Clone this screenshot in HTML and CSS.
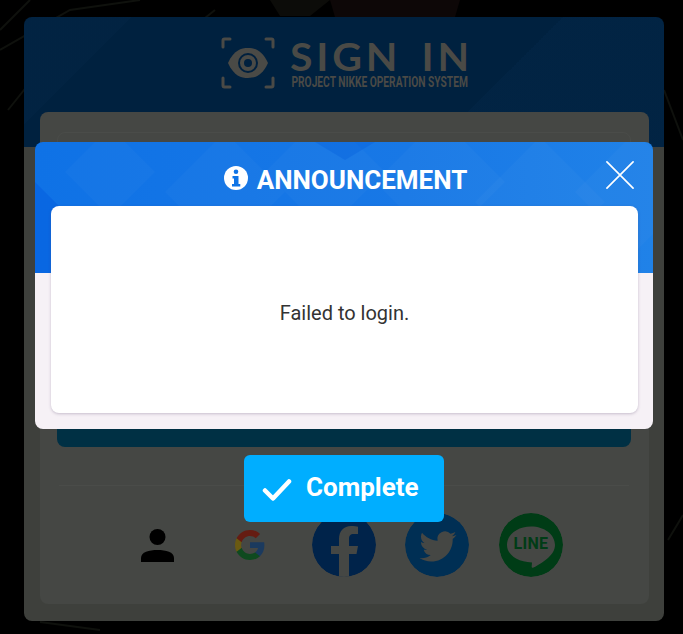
FILE: index.html
```html
<!DOCTYPE html>
<html lang="en">
<head>
<meta charset="utf-8">
<title>Sign in</title>
<link rel="stylesheet" href="styles.css">
</head>
<body>
<div class="stage">
  <svg class="bgart" viewBox="0 0 683 634" aria-hidden="true">
    <g fill="none" stroke="#0f110d" stroke-width="2">
      <path d="M0 50 70 10 140 0M8 110 40 70M0 30 30 0M215 10 165 50"/>
      <path d="M668 540 683 515M664 90 683 140M100 630 40 622"/>
    </g>
    <path d="M270 0h60l-20 16h-30z" fill="#0c0c09"/>
    <path d="M330 0h130l-5 17h-120z" fill="#0d0707"/>
  </svg>
  <main class="card">
    <header class="brand">
      <svg class="eye" viewBox="0 0 54 52" aria-hidden="true">
        <g fill="none" stroke="#4a4a46" stroke-width="3" stroke-linecap="round">
          <path d="M2 10V3.500Q2 2 3.500 2H9M45 2h5.500Q52 2 52 3.500V10M2 41v7.500Q2 50 3.500 50H9M45 50h5.500Q52 50 52 48.500V41"/>
        </g>
        <path d="M7 26C13 13 20 11 27 11s14 2 20 15c-6 13-13 15-20 15S13 39 7 26z" fill="#4a4a46"/>
        <circle cx="27" cy="26" r="9" fill="none" stroke="#00203e" stroke-width="2"/>
        <circle cx="27" cy="26" r="4" fill="#00203e"/>
      </svg>
      <div class="brand-text">
        <div class="brand-title">SIGN IN</div>
        <div class="brand-sub">PROJECT NIKKE OPERATION SYSTEM</div>
      </div>
    </header>
    <section class="panel">
      <div class="form-box"></div>
      <div class="teal-bar"></div>
      <hr class="divider">
      <div class="socials">
        <svg class="person" viewBox="0 0 33 33" aria-hidden="true">
          <circle cx="16.500" cy="8" r="8"/>
          <path d="M0 33v-4c0-6 8-8 16.500-8S33 23 33 29v4z"/>
        </svg>
        <svg class="google" viewBox="1 1 22 22" aria-hidden="true">
          <path fill="#1b3a5e" d="M22.560 12.250c0-.78-.07-1.530-.2-2.250H12v4.260h5.920c-.26 1.370-1.040 2.530-2.210 3.310v2.770h3.570c2.080-1.920 3.280-4.740 3.280-8.090z"/>
          <path fill="#0f4a1f" d="M12 23c2.970 0 5.460-.98 7.280-2.660l-3.570-2.770c-.98.66-2.230 1.060-3.710 1.060-2.860 0-5.290-1.930-6.160-4.530H2.180v2.840C3.990 20.530 7.700 23 12 23z"/>
          <path fill="#6a5a12" d="M5.840 14.090c-.22-.66-.35-1.360-.35-2.090s.13-1.430.35-2.090V7.070H2.180C1.430 8.550 1 10.220 1 12s.43 3.450 1.180 4.930l2.850-2.220.81-.62z"/>
          <path fill="#651c12" d="M12 5.380c1.620 0 3.060.56 4.210 1.640l3.150-3.150C17.450 2.090 14.970 1 12 1 7.700 1 3.990 3.470 2.180 7.070l3.660 2.840c.87-2.600 3.300-4.530 6.160-4.530z"/>
        </svg>
        <svg class="round" viewBox="0 0 64 64" aria-hidden="true">
          <circle cx="32" cy="32" r="32" fill="#00234a"/>
          <path d="M27 64V41h-8V33h8v-7c0-8 5-13 12-13 3 0 6 .5 7 .7V21h-4c-4 0-5 2-5 5v7h9l-1.500 8H37v23z" fill="#454744"/>
        </svg>
        <svg class="round round-wide" viewBox="0 0 64 64" aria-hidden="true">
          <circle cx="32" cy="32" r="32" fill="#002f54"/>
          <g transform="translate(14.500 15) scale(1.540)">
            <path fill="#454744" d="M23.953 4.570a10 10 0 01-2.825.775 4.958 4.958 0 002.163-2.723c-.951.555-2.005.959-3.127 1.184a4.920 4.920 0 00-8.384 4.482C7.690 8.095 4.067 6.130 1.640 3.162a4.822 4.822 0 00-.666 2.475c0 1.710.870 3.213 2.188 4.096a4.904 4.904 0 01-2.228-.616v.060a4.923 4.923 0 003.946 4.827 4.996 4.996 0 01-2.212.085 4.936 4.936 0 004.604 3.417 9.867 9.867 0 01-6.102 2.105c-.390 0-.779-.023-1.170-.067a13.995 13.995 0 007.557 2.209c9.053 0 13.998-7.496 13.998-13.985 0-.210 0-.420-.015-.630A9.935 9.935 0 0024 4.590z"/>
          </g>
        </svg>
        <svg class="round" viewBox="0 0 64 64" aria-hidden="true">
          <circle cx="32" cy="32" r="32" fill="#003c16"/>
          <path d="M32 13.500c13.500 0 24 8 24 18.500 0 5-2.800 9-6 12-4 3.800-11 8.500-15.500 10.500-1.500.6-2 0-1.800-1.300l.3-3.700C18 49 8 41.500 8 32c0-10.500 10.500-18.500 24-18.500z" fill="#454744"/>
          <text class="line-word" x="32" y="35.500" text-anchor="middle">LINE</text>
        </svg>
      </div>
    </section>
  </main>

  <a class="complete" href="#">
    <svg class="check" viewBox="0 0 30 24" aria-hidden="true">
      <path d="M3 12.500 11 20.500 27 3.500" fill="none" stroke="#fff" stroke-width="4.500" stroke-linecap="round" stroke-linejoin="round"/>
    </svg>
    <span>Complete</span>
  </a>

  <section class="modal" role="dialog">
    <svg class="modal-art" viewBox="0 0 618 131" aria-hidden="true">
      <g fill="#fff" fill-opacity=".022">
        <path d="M30 30 75 -15 120 30 75 75z"/>
        <path d="M130 50 190 -10 250 50 190 110z"/>
        <path d="M230 30 290 -30 350 30 290 90z"/>
        <path d="M340 40 405 -25 470 40 405 105z"/>
        <path d="M440 60 505 -5 570 60 505 125z"/>
        <path d="M540 50 600 -10 660 50 600 110z"/>
      </g>
      <path d="M0 40 60 100 40 131H0z" fill="#0058dc" fill-opacity=".4"/>
      <path d="M280 0h60l-30 18z" fill="#0058dc" fill-opacity=".3"/>
    </svg>
    <header class="modal-head">
      <h1 class="modal-title">
        <svg class="info" viewBox="0 0 24 24" aria-hidden="true">
          <circle cx="12" cy="12" r="12" fill="#fff"/>
          <circle cx="12" cy="5.800" r="2.300" fill="#0f74e6"/>
          <path d="M8.500 10h6v8h1.800v2.500H8v-2.500h2v-5.500H8.500z" fill="#0f74e6"/>
        </svg>
        <span>ANNOUNCEMENT</span>
      </h1>
      <svg class="close" viewBox="0 0 30 30" aria-hidden="true">
        <path d="M1 1 29 29M29 1 1 29" stroke="#fff" stroke-width="1.800" stroke-linecap="round"/>
      </svg>
    </header>
    <div class="modal-body">Failed to login.</div>
  </section>
</div>
</body>
</html>
```
FILE: styles.css
```css
* { box-sizing: border-box; }
html, body {
  margin: 0;
  height: 100%;
  overflow: hidden;
  background: #000;
  font-family: Roboto, "Liberation Sans", sans-serif;
}
.stage {
  position: relative;
  width: 683px;
  height: 634px;
  padding: 17px 19px 13px 24px;
}
.bgart {
  position: absolute;
  inset: 0;
  width: 683px;
  height: 634px;
}
.card {
  position: relative;
  height: 604px;
  padding: 0 15px 17px 16px;
  border-radius: 8px;
  background:
    linear-gradient(135deg, transparent 0 70%, rgba(10, 50, 90, .16) 70% 100%) 0 0 / 100% 130px no-repeat,
    linear-gradient(135deg, rgba(10, 45, 80, .18) 0 14%, transparent 14% 100%) 0 0 / 100% 130px no-repeat,
    linear-gradient(#00213f, #00213f) 0 0 / 100% 130px no-repeat,
    #3e403c;
}
.brand {
  height: 95px;
  padding: 20px 0 0 181px;
  display: flex;
  gap: 15px;
}
.eye {
  width: 54px;
  height: 52px;
  flex: none;
}
.brand-text {
  color: #4a4a46;
  width: 180px;
  padding-top: 2px;
}
.brand-title {
  font: 700 38px/34px Lato, sans-serif;
  letter-spacing: 3.500px;
  word-spacing: 6px;
  white-space: nowrap;
  transform: scaleX(1.08);
  transform-origin: left center;
}
.brand-sub {
  margin-top: 2px;
  padding-left: 2px;
  font: 700 14px/14px Roboto, sans-serif;
  white-space: nowrap;
  transform: scaleX(.73);
  transform-origin: left center;
}
.panel {
  height: 492px;
  padding: 20px 18px 0 17px;
  border-radius: 8px;
  background: #454744;
}
.form-box {
  height: 259px;
  border: 1px solid #4a4c49;
  border-radius: 8px;
}
.teal-bar {
  height: 56px;
  border-radius: 0 0 8px 8px;
  background: #003044;
}
.divider {
  margin: 38px 2px 0;
  border: 0;
  border-top: 1px solid #4a4c49;
}
.socials {
  margin-top: 27px;
  padding-left: 84px;
  display: flex;
  align-items: center;
}
.person {
  width: 33px;
  height: 33px;
  flex: none;
  margin-right: 61px;
  fill: #000;
}
.google {
  width: 30px;
  height: 30px;
  flex: none;
  margin-right: 47px;
}
.round {
  width: 64px;
  height: 64px;
  flex: none;
  margin-right: 29px;
  border-radius: 50%;
}
.round-wide {
  margin-right: 30px;
}
.line-word {
  font: 700 16px Roboto, sans-serif;
  letter-spacing: .3px;
  fill: #003c16;
}
.complete {
  position: absolute;
  left: 244px;
  top: 455px;
  width: 200px;
  height: 67px;
  padding: 0 0 3px 18px;
  display: flex;
  align-items: center;
  gap: 14px;
  border-radius: 6px;
  background: #00aeff;
  color: #fff;
  font-size: 26px;
  font-weight: 700;
  text-decoration: none;
}
.check {
  width: 30px;
  height: 24px;
  flex: none;
  margin-top: 6px;
}
.modal {
  position: absolute;
  left: 35px;
  top: 142px;
  width: 618px;
  height: 287px;
  padding: 0 15px 16px 16px;
  border-radius: 8px;
  overflow: hidden;
  background:
    linear-gradient(90deg, #0f72e6 0%, #1878e6 60%, #2082e8 100%) 0 0 / 100% 131px no-repeat,
    #f6f1f6;
}
.modal-art {
  position: absolute;
  left: 0;
  top: 0;
  width: 618px;
  height: 131px;
}
.modal-head {
  position: relative;
  height: 64px;
  display: flex;
  align-items: center;
  justify-content: center;
}
.modal-title {
  margin: 12px 0 0 2px;
  display: flex;
  align-items: center;
  gap: 9px;
  color: #fff;
  font-size: 26px;
  font-weight: 700;
  line-height: 30px;
}
.info {
  width: 24px;
  height: 24px;
  flex: none;
  margin-top: -5px;
}
.close {
  position: absolute;
  right: 3px;
  top: 19px;
  width: 30px;
  height: 28px;
}
.modal-body {
  position: relative;
  height: 207px;
  padding-top: 6px;
  display: flex;
  align-items: center;
  justify-content: center;
  border-radius: 8px;
  background: #fff;
  box-shadow: 0 1px 3px rgba(90, 70, 110, .3);
  color: #333;
  font-size: 20px;
}
```
